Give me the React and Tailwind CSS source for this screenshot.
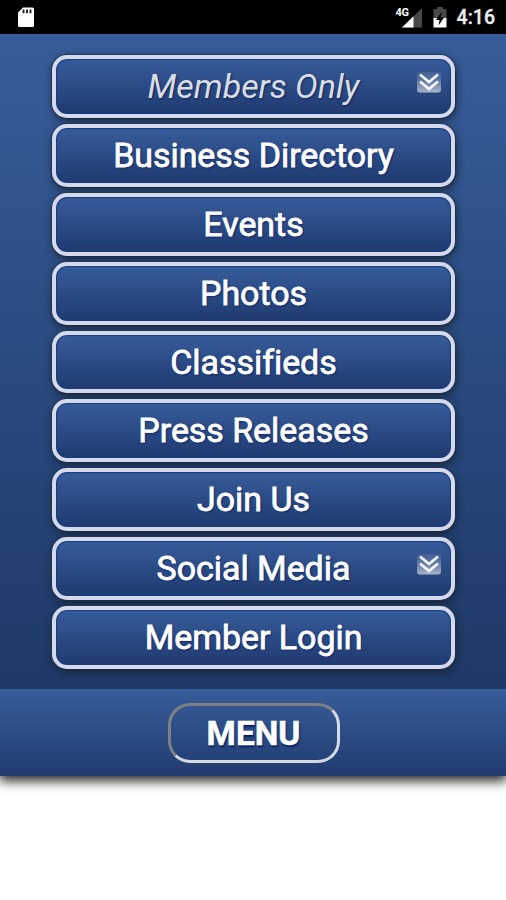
const items = [
  { label: 'Members Only', expandable: true, muted: true },
  { label: 'Business Directory' },
  { label: 'Events' },
  { label: 'Photos' },
  { label: 'Classifieds' },
  { label: 'Press Releases' },
  { label: 'Join Us' },
  { label: 'Social Media', expandable: true },
  { label: 'Member Login' },
];

function SdCard() {
  return (
    <svg className="ml-[17px] h-[22px] w-[18px]" viewBox="0 0 18 22">
      <path d="M6 1.5h9.500Q17 1.5 17 3v16.500Q17 21 15.500 21H2.500Q1 21 1 19.500V6.500z" fill="#fff" />
      <path d="M6.500 3.500v3.800M10 3.500v3.800M13.500 3.500v3.800" stroke="#222" strokeWidth="1.900" />
    </svg>
  );
}

function Signal() {
  return (
    <div className="relative h-[22px] w-[27px]">
      <svg className="h-[22px] w-[27px]" viewBox="0 0 27 22">
        <path d="M26 2V21.500H6z" fill="#484848" />
        <path d="M17.500 10.300V21.500H6z" fill="#fff" />
      </svg>
      <span className="absolute left-0 top-[1px] text-[11px] font-bold leading-[12px] tracking-[-0.500px] text-white">4G</span>
    </div>
  );
}

function Battery() {
  return (
    <svg className="ml-[9px] h-[22px] w-[16px]" viewBox="0 0 16 22">
      <path d="M5 1h6v2h3.500v10h-13V3H5z" fill="#484848" />
      <path d="M1.500 12h13v9.500h-13z" fill="#fff" />
      <path d="M10 5.500L4 14h3.500l-1 5.500L12 11.500H8.500z" fill="#000" />
    </svg>
  );
}

function Chevrons() {
  return (
    <svg className="absolute right-[9px] top-[12px] h-[23px] w-[26px]" viewBox="0 0 26 23">
      <defs>
        <linearGradient id="tile" x1="0" y1="0" x2="0" y2="1">
          <stop offset="0" stopColor="#627aa2" stopOpacity="0.350" />
          <stop offset="1" stopColor="#adb8ca" />
        </linearGradient>
      </defs>
      <rect x="1" y="1" width="24" height="20.500" rx="3" fill="url(#tile)" />
      <path d="M4 3.500l9 7.500 9-7.500M4 10.500l9 7.500 9-7.500" fill="none" stroke="#f3f5fa" strokeWidth="2.600" />
    </svg>
  );
}

export default function App() {
  return (
    <div className="h-[900px] w-[506px] overflow-hidden bg-white font-['Roboto',sans-serif]">
      <header className="flex h-[34px] items-center justify-between bg-black">
        <SdCard />
        <div className="flex items-center pr-[11px]">
          <Signal />
          <Battery />
          <span className="ml-[9px] mt-[2px] text-[19.500px] font-medium leading-[22px] text-[#eee] [-webkit-text-stroke:0.300px_#eee]">4:16</span>
        </div>
      </header>
      <div className="h-[742px] shadow-[0_4px_11px_1px_#000000d9]">
        <nav className="flex h-[655px] flex-col items-center gap-[6px] bg-linear-to-b from-[#375d9a] to-[#1e3967] pt-[21px]">
          {items.map(({ label, expandable, muted }) => (
            <button
              key={label}
              className="relative h-[62.900px] w-[403px] shrink-0 rounded-[15px] border-[4px] border-[#d6d8ec] bg-linear-to-b from-[#375c9b] to-[#1f3a70] shadow-[1px_3px_9px_#16202de0,0_0_1px_1px_#24406b,inset_0_0_1px_1px_#163f80]"
            >
              <span
                className={
                  muted
                    ? 'block pl-px text-[34px] font-normal italic leading-[55px] tracking-[-0.040px] text-[#dadde2] [text-shadow:1px_1px_2px_#10255a]'
                    : 'block pl-px text-[34px] font-normal leading-[55px] tracking-[-0.060px] text-white [font-variant-ligatures:none] [-webkit-text-stroke:0.800px_#fff] [text-shadow:1px_1px_2px_#061b60]'
                }
              >
                {label}
              </span>
              {expandable && <Chevrons />}
            </button>
          ))}
        </nav>
        <footer className="flex h-[87px] items-center justify-center bg-linear-to-b from-[#375d9a] to-[#203c70]">
          <button className="ml-px mt-px h-[60px] w-[172px] rounded-[22px] border-[3px] border-t-[#7f8084] border-l-[#7f8084] border-r-[#d4d9e2] border-b-[#d4d9e2] text-[33.500px] font-bold leading-[56px] text-white [-webkit-text-stroke:0.500px_#fff] [text-shadow:1px_2px_2px_#061b60]">
            MENU
          </button>
        </footer>
      </div>
    </div>
  );
}
